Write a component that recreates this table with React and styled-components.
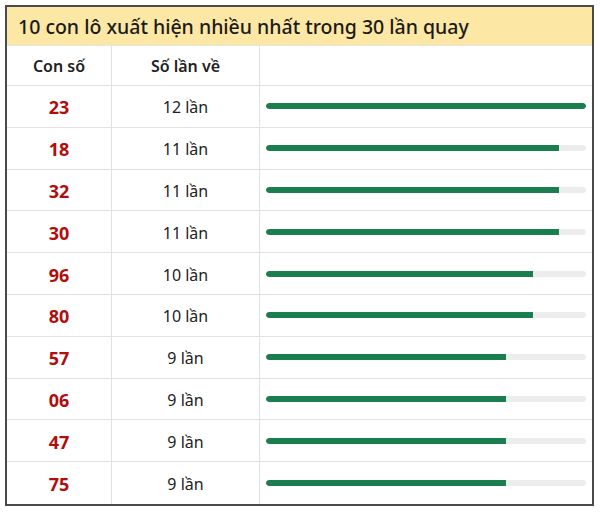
import React from 'react';
import styled, { createGlobalStyle } from 'styled-components';

const GlobalStyle = createGlobalStyle`
	html, body {
		margin: 0;
		padding: 0;
		background: #fff;
		font-family: 'Noto Sans', 'Open Sans', sans-serif;
	}
`;

const Page = styled.div`
	width: 600px;
	height: 512px;
	padding: 5px 5px 0 5px;
	box-sizing: border-box;
`;

const Frame = styled.div`
	width: 589px;
	height: 501px;
	box-sizing: border-box;
	border: 2px solid #4a4a4a;
	display: flex;
	flex-direction: column;
	background: #fff;
`;

const Title = styled.div`
	height: 39px;
	background: #fce7a4;
	display: flex;
	align-items: center;
	padding-left: 11px;
	font-size: 19.5px;
	font-weight: 500;
	color: #1a1a1a;
	border-bottom: 1px solid #e6e6e6;
	box-sizing: border-box;
`;

const Row = styled.div`
	display: grid;
	grid-template-columns: 105px 148px 1fr;
	height: ${(p) => p.h}px;
	border-bottom: ${(p) => (p.last ? 'none' : '1px solid #e2e2e2')};
	box-sizing: border-box;
`;

const Cell = styled.div`
	display: flex;
	align-items: center;
	justify-content: center;
	border-right: ${(p) => (p.end ? 'none' : '1px solid #e2e2e2')};
	font-size: 16px;
	font-weight: ${(p) => (p.head ? 600 : 400)};
	color: #222;
	padding-top: ${(p) => (p.head ? 0 : 2)}px;
`;

const Num = styled(Cell)`
	color: #b10d0d;
	font-weight: 700;
	font-size: 18px;
`;

const BarCell = styled.div`
	display: flex;
	align-items: center;
	padding: 0 6px 0 6px;
`;

const Track = styled.div`
	width: 320px;
	height: 6px;
	border-radius: 3px;
	background: #ebedef;
	overflow: hidden;
`;

const Fill = styled.div`
	height: 100%;
	background: #1b7e4f;
	border-radius: 3px 0 0 3px;
`;

const data = [
	['23', 12],
	['18', 11],
	['32', 11],
	['30', 11],
	['96', 10],
	['80', 10],
	['57', 9],
	['06', 9],
	['47', 9],
	['75', 9],
];

const App = () => {
	const max = 12;
	return (
		<Page>
			<GlobalStyle />
			<Frame>
				<Title>10 con lô xuất hiện nhiều nhất trong 30 lần quay</Title>
				<Row h={40}>
					<Cell head>Con số</Cell>
					<Cell head>Số lần về</Cell>
					<Cell end />
				</Row>
				{data.map(([n, c], i) => (
					<Row key={i} h={41.8} last={i === data.length - 1}>
						<Num>{n}</Num>
						<Cell>{c} lần</Cell>
						<BarCell>
							<Track>
								<Fill style={{ width: `${(c / max) * 100}%`, borderRadius: c === max ? '3px' : undefined }} />
							</Track>
						</BarCell>
					</Row>
				))}
			</Frame>
		</Page>
	);
};

export default App;
